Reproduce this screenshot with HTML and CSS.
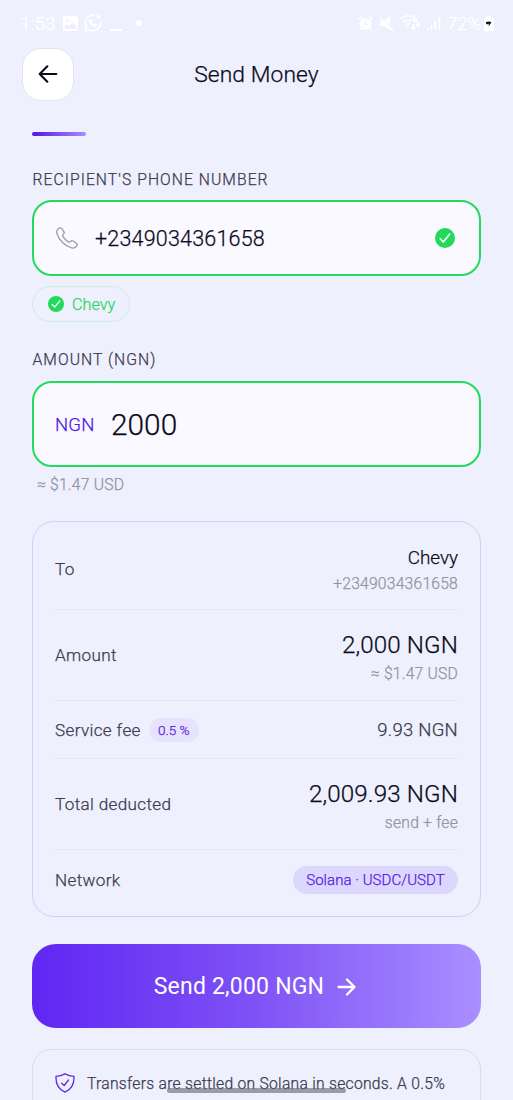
FILE: index.html
```html
<!DOCTYPE html>
<html lang="en">
<head>
<meta charset="utf-8">
<title>Send Money</title>
<link rel="stylesheet" href="styles.css">
</head>
<body>
<div class="screen">
  <div class="status">
    <div class="status-left">
      <span class="clock">1:53</span>
      <svg class="ic-photo" width="15" height="15" viewBox="0 0 15 15"><path fill="#fff" fill-rule="evenodd" d="M2 0h11a2 2 0 0 1 2 2v11a2 2 0 0 1-2 2H2a2 2 0 0 1-2-2V2a2 2 0 0 1 2-2zM1.500 10.500v2.500h12v-3L9.500 6.500 6 10 4 8.500zM4.500 3a1.500 1.500 0 1 0 0 3 1.500 1.500 0 0 0 0-3z"/></svg>
      <svg class="ic-chat" width="18" height="18" viewBox="0 0 18 18" fill="none" stroke="#fff" stroke-width="1.600"><path d="M10.500 1.600A7.300 7.300 0 0 0 2.400 12.500L1.300 16.700l4.300-1.100A7.300 7.300 0 0 0 16.300 7.500M14.500 0v5M12 2.500h5"/><path fill="#fff" stroke="none" d="M6.500 5l1.300.2.700 2-.7.800c.6 1.200 1.400 2 2.600 2.500l.9-.9 2 .9c.2 1.500-1 2.300-2.300 2.200C7.500 12.300 5 9.200 5 7c0-1 .7-1.800 1.500-2z"/></svg>
      <i class="dash"></i><i class="dot"></i>
    </div>
    <div class="status-right">
      <svg width="15" height="15" viewBox="0 0 15 15"><circle cx="7.500" cy="8" r="6" fill="#fff"/><path stroke="#fff" stroke-width="1.800" d="M.7 3.300 3.400 1M14.300 3.300 11.600 1M3 12.500 1.700 14.300M12 12.500l1.300 1.800"/><path d="M7.500 4.500V8.300h3" fill="none" stroke="#eef0fe" stroke-width="1.300"/></svg>
      <svg width="15" height="15" viewBox="0 0 15 15"><path fill="#fff" d="M1 5h3.500L11 0v14L4.500 10H1z"/><path d="M1.500.5 14.500 13.500" stroke="#eef0fe" stroke-width="1.200"/><path d="M1 1.500 14 14.500" stroke="#fff" stroke-width="1.700"/></svg>
      <svg width="21" height="16" viewBox="0 0 21 16" fill="none" stroke="#fff" stroke-width="1.500"><path d="M.7 4.500Q6-1 12.500 1.800M3 7.500Q7 3.500 11.500 6M5.300 10Q8 8 10 9.500"/><circle cx="8" cy="11.500" r="1" fill="#fff" stroke="none"/><circle cx="15" cy="5.500" r="1.500"/><path d="M15.500.7Q13 2 13.500 5.500M13.500 9v5M11.500 12l2 2.500 2-2.500M18 13V8.500M16 10.500 18 8l2 2.500"/></svg>
      <svg width="14" height="15" viewBox="0 0 14 15" fill="#fff"><path d="M0 12h1.700v2H0zM3.700 9h1.700v5H3.700zM7.500 5h1.700v9H7.500zM11.500 1h1.700v13h-1.700z"/></svg>
      <span class="pct">72%</span>
      <svg class="ic-batt" width="10" height="15" viewBox="0 0 10 15"><path fill="#fff" d="M3 0h4v1.500h1.500A1.500 1.500 0 0 1 10 3v10.500A1.500 1.500 0 0 1 8.500 15h-7A1.500 1.500 0 0 1 0 13.500V3a1.500 1.500 0 0 1 1.500-1.500H3z"/><path d="M2 6l3-.6 2.500.8-3 4.300.3-2.800L2.300 8.500z" fill="#111"/></svg>
    </div>
  </div>

  <header class="header">
    <div class="back"><svg width="20" height="18" viewBox="0 0 20 18" fill="none" stroke="#0b0a1c" stroke-width="2.100" stroke-linecap="round" stroke-linejoin="round"><path d="M18.300 9H1.700M9.300 1.300 1.700 9l7.600 7.700"/></svg></div>
    <h1 class="title">Send Money</h1>
  </header>

  <main class="main">
    <div class="progress"></div>

    <div class="label">RECIPIENT'S PHONE NUMBER</div>
    <div class="field phone">
      <svg class="ic-phone" width="22" height="22" viewBox="0 0 22 22" fill="none" stroke="#9a9bab" stroke-width="1.300" stroke-linejoin="round"><path d="M2.200 1.700C3.400.5 5 .5 5.900 1.700l2 3c.7 1.200.3 2-.7 2.700-1 .8-.7 1.500 0 2.500 1.200 1.900 2.800 3.500 4.700 4.700 1 .7 1.700 1 2.500 0 .7-1 1.600-1.300 2.700-.6l3 2c1.300.9 1.300 2.300.2 3.500-1.200 1.300-2.800 1.900-4.700 1.400C8.800 19.100 3 13.300 1 6.600.4 4.700 1 2.900 2.200 1.700z"/></svg>
      <span class="number">+2349034361658</span>
      <svg class="ic-ok" width="20" height="20" viewBox="0 0 20 20"><circle cx="10" cy="10" r="10" fill="#23d95c"/><path d="M5.300 10.700 8.300 13.900 14.800 6" fill="none" stroke="#fff" stroke-width="1.600" stroke-linecap="round" stroke-linejoin="round"/></svg>
    </div>
    <div class="match">
      <svg width="16" height="16" viewBox="0 0 20 20"><circle cx="10" cy="10" r="10" fill="#23d95c"/><path d="M5.300 10.700 8.300 13.900 14.800 6" fill="none" stroke="#fff" stroke-width="1.600" stroke-linecap="round" stroke-linejoin="round"/></svg>
      <span>Chevy</span>
    </div>

    <div class="label amount-label">AMOUNT (NGN)</div>
    <div class="field amount"><span class="cur">NGN</span><span class="value">2000</span></div>
    <div class="hint">≈ $1.47 USD</div>

    <section class="summary">
      <div class="row r-to"><span>To</span><div class="right"><b class="name">Chevy</b><small>+2349034361658</small></div></div>
      <div class="row r-big"><span>Amount</span><div class="right"><b class="sum">2,000 NGN</b><small>≈ $1.47 USD</small></div></div>
      <div class="row r-fee"><span>Service fee</span><em class="rate">0.5 %</em><div class="right fee">9.93 NGN</div></div>
      <div class="row r-big"><span>Total deducted</span><div class="right"><b class="sum">2,009.93 NGN</b><small>send + fee</small></div></div>
      <div class="row r-net"><span>Network</span><div class="right net">Solana · USDC/USDT</div></div>
    </section>

    <div class="send"><span>Send 2,000 NGN</span><svg width="19" height="18" viewBox="0 0 19 18" fill="none" stroke="#fff" stroke-width="2.300" stroke-linecap="round" stroke-linejoin="round"><path d="M1.500 9h16M10 1.500 17.500 9 10 16.500"/></svg></div>

    <div class="note">
      <svg width="20" height="20" viewBox="0 0 20 20" fill="none" stroke="#6127e8" stroke-width="1.300" stroke-linecap="round" stroke-linejoin="round"><path d="M10 .9C7 2.700 4 3.300 1 3.300c-.4 7.500 2.300 12.800 9 15.900 6.700-3.100 9.400-8.400 9-15.900-3 0-6-.6-9-2.400z"/><path d="M6.700 10.300 9.200 12.500 13.500 7"/></svg>
      <span>Transfers are settled on Solana in seconds. A 0.5%</span>
    </div>
  </main>
  <div class="homebar"></div>
</div>
</body>
</html>
```

FILE: styles.css
```css
* { box-sizing: border-box; }
body { margin: 0; background: #eff0fe; font-family: Roboto, sans-serif; font-weight: 300; -webkit-text-stroke: .25px; color: #0b0a1c; }
svg { display: block; flex: none; }
.screen { position: relative; width: 513px; height: 1100px; overflow: hidden; }

.status { height: 46px; display: flex; justify-content: space-between; color: #fff; font-size: 19px; padding: 0 19px 0 20px; }
.status-left, .status-right { display: flex; align-items: center; height: 46px; }
.clock { width: 43px; }
.ic-chat { margin-left: 6px; }
.dash { width: 12px; height: 2px; background: #fff; margin: 14px 0 0 8px; }
.dot { width: 6px; height: 6px; border-radius: 50%; background: #fff; margin-left: 14px; }
.status-right { gap: 6px; }
.pct { letter-spacing: -.3px; }
.ic-batt { margin-left: -3px; }

.header { display: grid; grid-template-columns: 53px 1fr 53px; align-items: center; padding: 0 22px; height: 54px; }
.back { width: 52px; height: 53px; background: #fff; border: 1px solid #e6e3f1; border-radius: 19px; display: grid; place-items: center; }
.back svg { margin-top: -1px; }
.title { margin: 0; font-size: 22.800px; font-weight: 300; text-align: center; line-height: 54px; padding-top: 2px; letter-spacing: .1px; }

.main { padding: 0 32px; }
.progress { width: 54px; height: 4px; margin-top: 32px; border-radius: 2px; background: linear-gradient(90deg, #4f16ea, #a88cff); }
.label { margin-top: 34px; height: 20px; line-height: 20px; font-size: 15.700px; letter-spacing: 1.050px; color: #3b3a50; padding-left: .5px; }
.field { border: 2px solid #25d95c; border-radius: 20px; background: #faf9ff; display: flex; align-items: center; padding: 0 24px 0 21px; }
.phone { margin-top: 10px; height: 76px; }
.number { margin-left: 17px; font-size: 21.500px; letter-spacing: .2px; }
.ic-phone { margin-left: 1px; }
.ic-ok { margin-left: auto; }
.match { display: inline-flex; align-items: center; gap: 8px; margin-top: 10px; width: 98px; height: 36px; padding-left: 15px; border: 1px solid #cbeee3; border-radius: 18px; color: #23d95c; font-size: 16.200px; vertical-align: top; }
.amount-label { margin-top: 28px; }
.amount { margin-top: 11px; height: 86px; }
.cur { font-size: 18.500px; letter-spacing: .2px; color: #5218e8; padding-top: 1px; }
.value { margin-left: 16.500px; font-size: 29.800px; padding-top: 1px; }
.hint { padding-left: 5px; margin-top: 8px; height: 20px; line-height: 20px; font-size: 15.700px; letter-spacing: .2px; color: #9293a3; }

.summary { margin-top: 26px; height: 396px; border: 1px solid #d6ccfb; border-radius: 22px; padding: 0 22px; display: flex; flex-direction: column; }
.row { display: flex; align-items: center; font-size: 17.100px; letter-spacing: .35px; color: #3b3a50; border-bottom: 1px solid #e6e5f1; }
.row:last-child { border-bottom: 0; }
.right { margin-left: auto; display: flex; flex-direction: column; align-items: flex-end; }
.right b { font-weight: 300; color: #0b0a1c; }
.right small { font-size: 15.700px; line-height: 20px; letter-spacing: .2px; color: #9293a3; }
.r-to { height: 88px; padding-top: 7px; }
.r-big { height: 91px; }
.r-fee { height: 58px; }
.r-net { height: 62px; padding-bottom: 2px; }
.name { font-size: 18.900px; line-height: 30px; margin: -2px 0 1px; letter-spacing: 0; }
.sum { font-size: 24.200px; line-height: 38px; margin: -1px 0 0; letter-spacing: .1px; }
.fee { font-size: 18.500px; letter-spacing: .25px; }
.rate { font-style: normal; font-size: 13.500px; letter-spacing: 0; margin-left: 8px; width: 50px; height: 24px; line-height: 24px; text-align: center; border-radius: 12px; background: #e7e2fd; color: #5a20e6; }
.net { width: 165px; height: 28px; line-height: 29px; align-items: center; border-radius: 14px; background: #ded7fd; color: #5218e8; font-size: 15px; letter-spacing: .05px; }

.send { margin-top: 27px; height: 84px; border-radius: 24px; background: linear-gradient(90deg, #6026f3, #7f52f6 50%, #a98fff); color: #fff; font-size: 23px; font-weight: 400; -webkit-text-stroke: 0; letter-spacing: .2px; display: flex; align-items: center; justify-content: center; gap: 13px; padding: 1px 3px 0 0; }
.note { margin-top: 21px; height: 100px; border: 1px solid #ddd5fb; border-radius: 20px; padding: 24px 22px; display: flex; align-items: flex-start; gap: 12px; font-size: 15.700px; line-height: 20px; letter-spacing: .26px; color: #3b3a50; white-space: nowrap; }
.note svg { margin-top: -1px; }
.homebar { position: absolute; left: 167px; top: 1088px; width: 179px; height: 5px; border-radius: 3px; background: rgba(100, 98, 115, .6); }
```
